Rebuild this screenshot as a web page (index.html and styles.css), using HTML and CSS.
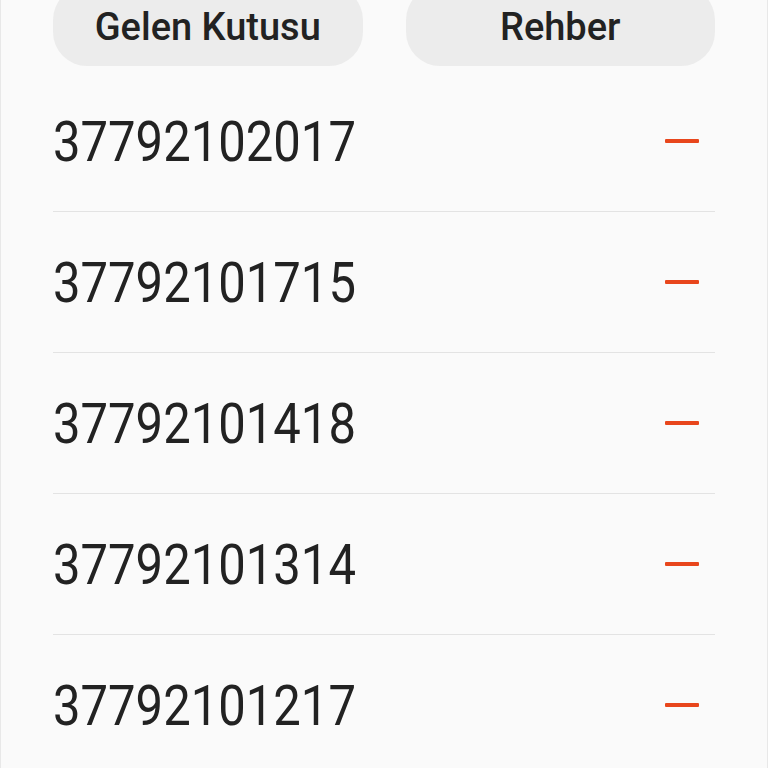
FILE: index.html
```html
<!DOCTYPE html>
<html lang="tr">
<head>
    <meta charset="UTF-8">
    <meta name="viewport" content="width=device-width, initial-scale=1.0">
    <title>Engellenen numaralar</title>
    <link rel="stylesheet" href="styles.css">
</head>
<body>
    <div class="screen">
        <div class="tabs">
            <button class="tab">Gelen Kutusu</button>
            <button class="tab">Rehber</button>
        </div>
        <ul class="numbers">
            <li class="row"><span class="num">37792102017</span><span class="remove"></span></li>
            <li class="row"><span class="num">37792101715</span><span class="remove"></span></li>
            <li class="row"><span class="num">37792101418</span><span class="remove"></span></li>
            <li class="row"><span class="num">37792101314</span><span class="remove"></span></li>
            <li class="row"><span class="num">37792101217</span><span class="remove"></span></li>
        </ul>
    </div>
</body>
</html>
```

FILE: styles.css
```css
* {
    margin: 0;
    padding: 0;
    box-sizing: border-box;
    font-family: Roboto, 'Noto Sans', sans-serif;
}

html, body {
    height: 100%;
    overflow: hidden;
}

body {
    background: #fafafa;
}

.screen {
    display: flow-root;
    height: 100%;
    padding: 0 52px;
    border-left: 1px solid #e8e8e8;
    border-right: 1px solid #e8e8e8;
}

.tabs {
    display: flex;
    gap: 43px;
    margin-top: -14px;
}

.tab {
    flex: 1;
    height: 80px;
    border: none;
    border-radius: 34px;
    background: #ececec;
    color: #222;
    font-size: 38px;
    font-weight: 500;
    padding-top: 2px;
}

.numbers {
    list-style: none;
    margin-top: 5px;
}

.row {
    height: 141px;
    display: flex;
    align-items: center;
    justify-content: space-between;
    border-bottom: 1px solid #e3e3e3;
    padding-top: 2px;
}

.num {
    display: inline-block;
    font-size: 49px;
    color: #222;
    transform: scaleY(1.12);
}

.remove {
    width: 34px;
    height: 4px;
    margin-right: 16px;
    margin-top: -3px;
    background: #e8461c;
    border-radius: 1px;
}
```
